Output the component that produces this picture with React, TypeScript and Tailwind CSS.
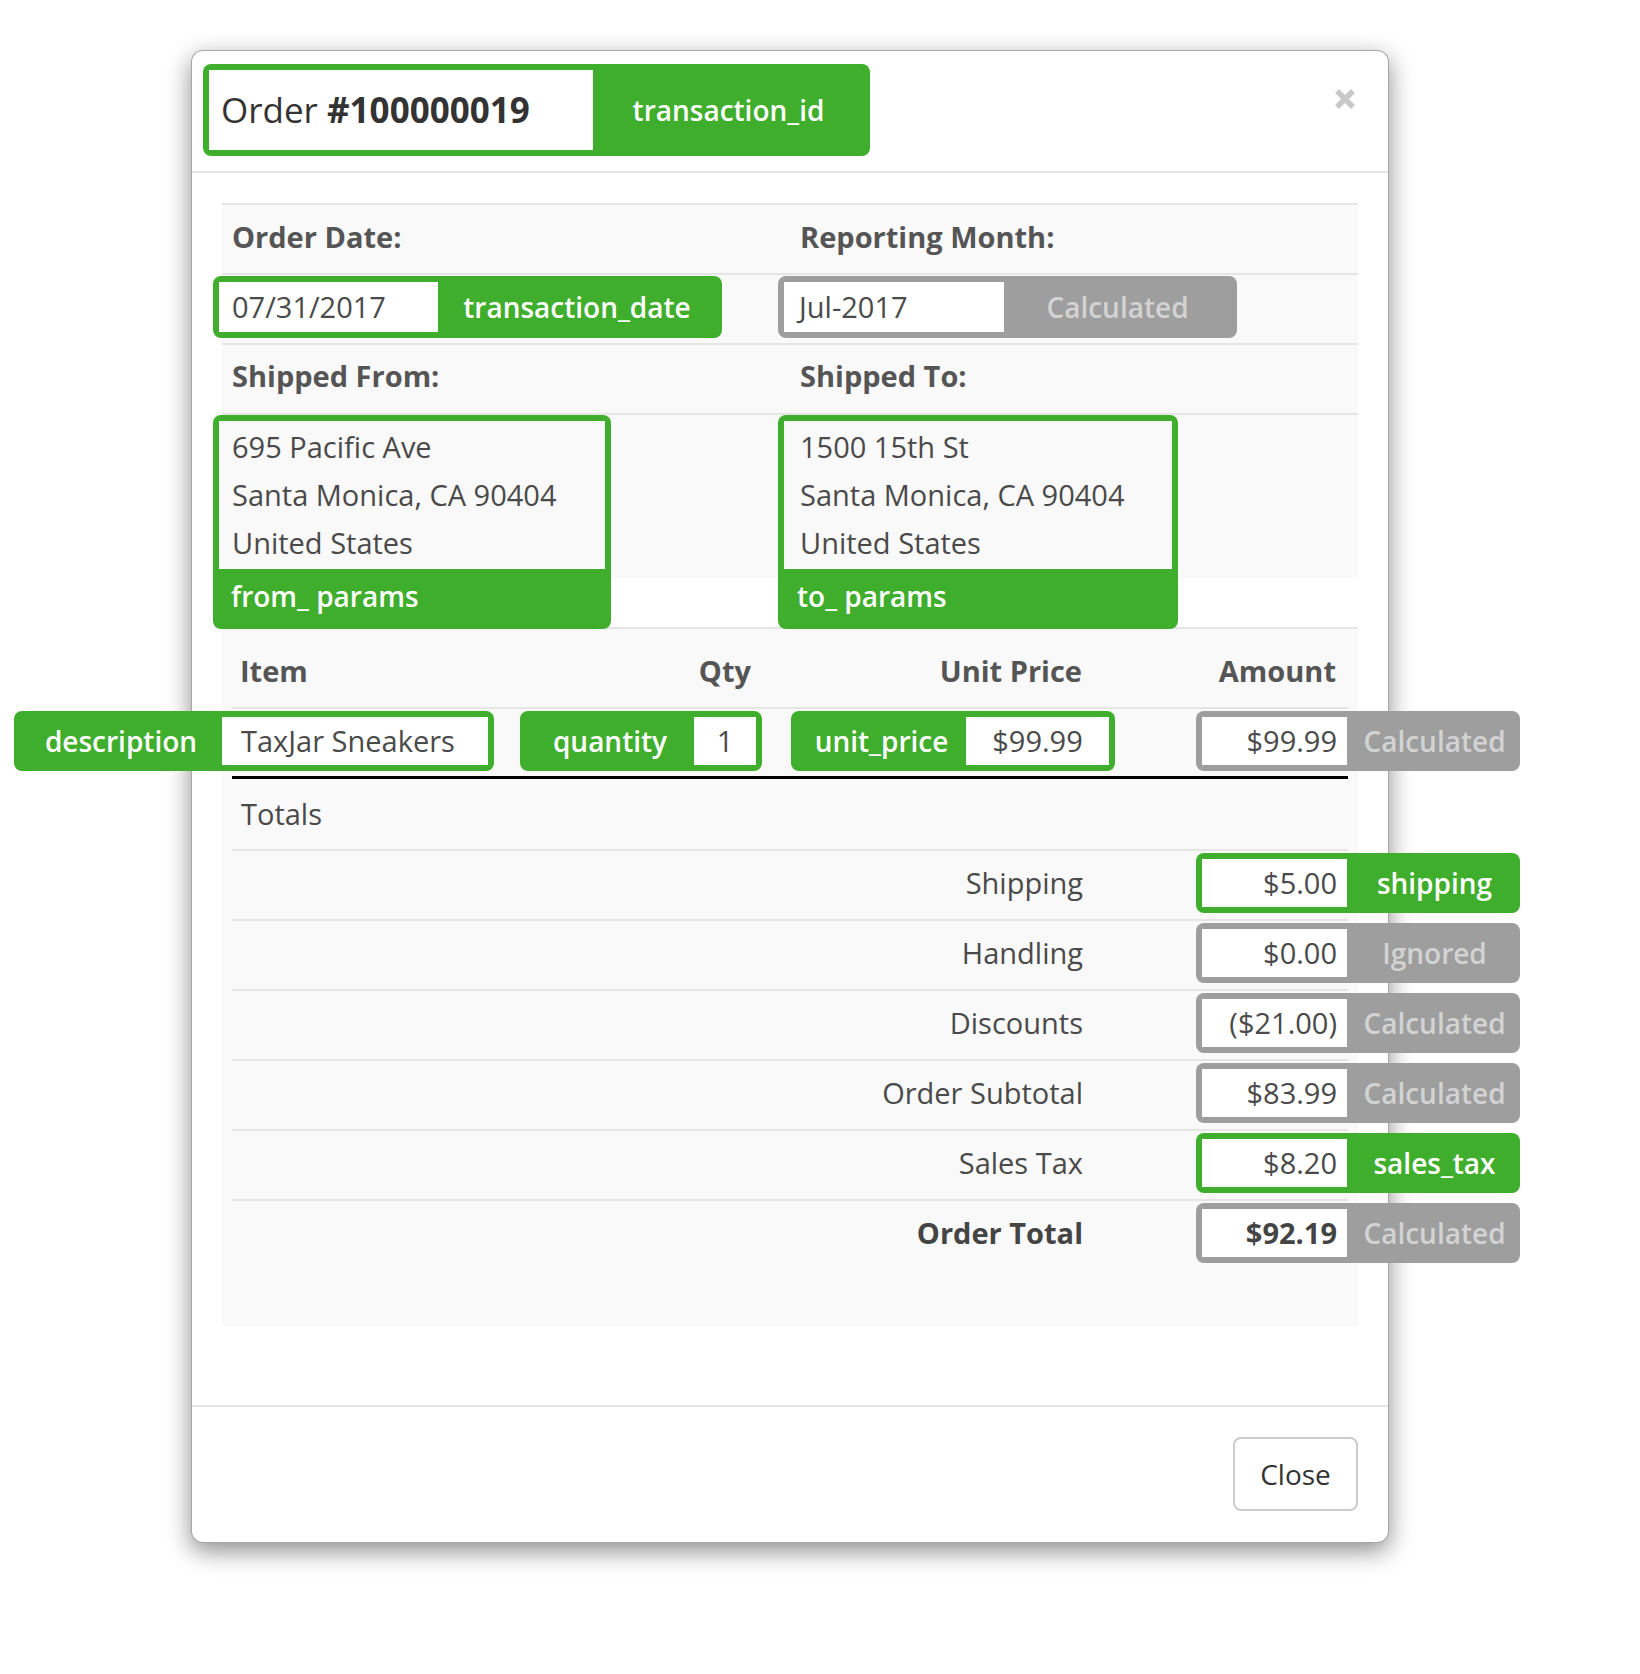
import React from "react";

function XIcon() {
  return (
    <svg width="20" height="20" viewBox="0 0 20 20" className="mt-[25px] flex-none">
      <path d="M2 2 L18 18 M18 2 L2 18" stroke="#c8c8c8" strokeWidth="5.5" strokeLinecap="butt" />
    </svg>
  );
}

function TotalRow({
  label,
  value,
  tag,
  tone,
  bold,
}: {
  label: string;
  value: string;
  tag: string;
  tone: "green" | "gray";
  bold?: boolean;
}) {
  return (
    <div className="flex h-[70px] items-start border-t-2 border-[#e5e5e5] pt-[2px]">
      <div
        className={
          bold
            ? "flex h-[60px] w-[851px] flex-none items-center justify-end font-bold text-[#444]"
            : "flex h-[60px] w-[851px] flex-none items-center justify-end"
        }
      >
        {label}
      </div>
      <div
        className={
          tone === "green"
            ? "relative ml-[113px] flex h-[60px] w-[324px] flex-none rounded-[8px] bg-[#40ae2d] p-[6px]"
            : "relative ml-[113px] flex h-[60px] w-[324px] flex-none rounded-[8px] bg-[#9e9e9e] p-[6px]"
        }
      >
        <div
          className={
            bold
              ? "flex w-[145px] flex-none items-center justify-end bg-white pr-[10px] font-bold text-[#444]"
              : "flex w-[145px] flex-none items-center justify-end bg-white pr-[10px]"
          }
        >
          {value}
        </div>
        <div
          className={
            tone === "green"
              ? "flex flex-1 items-center justify-center pl-[8px] text-[28px] font-semibold text-white"
              : "flex flex-1 items-center justify-center pl-[8px] text-[28px] font-semibold text-[#d3d3d3]"
          }
        >
          {tag}
        </div>
      </div>
    </div>
  );
}

export default function App() {
  return (
    <div className="min-h-[1674px] w-full bg-white pl-[191px] pt-[50px] font-['Open_Sans',sans-serif] text-[29px] leading-[40px] text-[#4a4a4a]">
      <div className="relative w-[1198px] rounded-[12px] border border-[rgba(0,0,0,0.35)] bg-white shadow-[0_8px_24px_rgba(0,0,0,0.45)]">
        {/* Header */}
        <div className="flex items-start justify-between border-b-2 border-[#e5e5e5] pb-[15px] pl-[11px] pr-[33px] pt-[13px]">
          <div className="flex h-[92px] w-[667px] rounded-[8px] bg-[#40ae2d] p-[6px]">
            <div className="flex w-[384px] flex-none items-center bg-white pl-[12px] text-[35px] text-[#333]">
              Order&nbsp;<span className="font-bold">#100000019</span>
            </div>
            <div className="flex flex-1 items-center justify-center text-[28px] font-semibold text-white">transaction_id</div>
          </div>
          <XIcon />
        </div>

        {/* Body */}
        <div className="px-[30px] pb-[79px] pt-[30px]">
          {/* Section A */}
          <div className="border-t-2 border-[#e5e5e5] bg-[#f9f9f9]">
            <div className="grid h-[68px] grid-cols-2 items-center pb-[4px] font-bold text-[#555]">
              <div className="pl-[10px]">Order Date:</div>
              <div className="pl-[10px]">Reporting Month:</div>
            </div>
            <div className="grid h-[70px] grid-cols-2 items-start border-t-2 border-[#e5e5e5] pt-[1px]">
              <div>
                <div className="relative -ml-[9px] flex h-[62px] w-[509px] rounded-[8px] bg-[#40ae2d] p-[6px]">
                  <div className="flex w-[219px] flex-none items-center bg-white pl-[13px]">07/31/2017</div>
                  <div className="flex flex-1 items-center justify-center text-[28px] font-semibold text-white">transaction_date</div>
                </div>
              </div>
              <div>
                <div className="relative -ml-[12px] flex h-[62px] w-[459px] rounded-[8px] bg-[#9e9e9e] p-[6px]">
                  <div className="flex w-[220px] flex-none items-center bg-white pl-[15px]">Jul-2017</div>
                  <div className="flex flex-1 items-center justify-center text-[28px] font-semibold text-[#d3d3d3]">Calculated</div>
                </div>
              </div>
            </div>
            <div className="grid h-[70px] grid-cols-2 items-center border-t-2 border-[#e5e5e5] pb-[6px] font-bold text-[#555]">
              <div className="pl-[10px]">Shipped From:</div>
              <div className="pl-[10px]">Shipped To:</div>
            </div>
            <div className="grid h-[165px] grid-cols-2 items-start border-t-2 border-[#e5e5e5]">
              <div>
                <div className="relative z-10 -ml-[9px] flex h-[214px] w-[398px] flex-col rounded-[8px] bg-[#40ae2d] p-[6px]">
                  <div className="h-[148px] bg-[#f9f9f9] pl-[13px] pt-[2px] leading-[48px]">
                    <div>695 Pacific Ave</div>
                    <div>Santa Monica, CA 90404</div>
                    <div>United States</div>
                  </div>
                  <div className="flex h-[54px] items-center pl-[12px] text-[28px] font-semibold text-white">from_ params</div>
                </div>
              </div>
              <div>
                <div className="relative z-10 -ml-[12px] flex h-[214px] w-[400px] flex-col rounded-[8px] bg-[#40ae2d] p-[6px]">
                  <div className="h-[148px] bg-[#f9f9f9] pl-[16px] pt-[2px] leading-[48px]">
                    <div>1500 15th St</div>
                    <div>Santa Monica, CA 90404</div>
                    <div>United States</div>
                  </div>
                  <div className="flex h-[54px] items-center pl-[13px] text-[28px] font-semibold text-white">to_ params</div>
                </div>
              </div>
            </div>
          </div>

          <div className="h-[49px] bg-white"></div>

          {/* Section B */}
          <div className="relative border-t-2 border-[#e5e5e5] bg-[#f9f9f9] px-[10px] pb-[57px]">
            <div className="grid h-[78px] grid-cols-[348px_179px_331px_258px] items-center pt-[6px] font-bold text-[#555]">
              <div className="pl-[8px]">Item</div>
              <div className="pr-[8px] text-right">Qty</div>
              <div className="pr-[8px] text-right">Unit Price</div>
              <div className="pr-[12px] text-right">Amount</div>
            </div>
            <div className="flex h-[72px] items-start border-b-[3px] border-t-2 border-b-black border-t-[#e5e5e5] pt-[2px]">
              <div className="relative z-10 -ml-[218px] flex h-[60px] w-[480px] flex-none rounded-[8px] bg-[#40ae2d] p-[6px]">
                <div className="flex w-[202px] flex-none items-center justify-center text-[28px] font-semibold text-white">description</div>
                <div className="flex flex-1 items-center bg-white pl-[19px]">TaxJar Sneakers</div>
              </div>
              <div className="relative ml-[26px] flex h-[60px] w-[242px] flex-none rounded-[8px] bg-[#40ae2d] p-[6px]">
                <div className="flex w-[168px] flex-none items-center justify-center text-[28px] font-semibold text-white">quantity</div>
                <div className="flex flex-1 items-center justify-center bg-white">1</div>
              </div>
              <div className="relative ml-[29px] flex h-[60px] w-[324px] flex-none rounded-[8px] bg-[#40ae2d] p-[6px]">
                <div className="flex w-[169px] flex-none items-center justify-center text-[28px] font-semibold text-white">unit_price</div>
                <div className="flex flex-1 items-center justify-center bg-white">$99.99</div>
              </div>
              <div className="relative ml-[81px] flex h-[60px] w-[324px] flex-none rounded-[8px] bg-[#9e9e9e] p-[6px]">
                <div className="flex w-[145px] flex-none items-center justify-end bg-white pr-[10px]">$99.99</div>
                <div className="flex flex-1 items-center justify-center pl-[8px] text-[28px] font-semibold text-[#d3d3d3]">Calculated</div>
              </div>
            </div>
            <div className="flex h-[70px] items-center pl-[9px]">Totals</div>
            <TotalRow label="Shipping" value="$5.00" tag="shipping" tone="green" />
            <TotalRow label="Handling" value="$0.00" tag="Ignored" tone="gray" />
            <TotalRow label="Discounts" value="($21.00)" tag="Calculated" tone="gray" />
            <TotalRow label="Order Subtotal" value="$83.99" tag="Calculated" tone="gray" />
            <TotalRow label="Sales Tax" value="$8.20" tag="sales_tax" tone="green" />
            <TotalRow label="Order Total" value="$92.19" tag="Calculated" tone="gray" bold />
          </div>
        </div>

        {/* Footer */}
        <div className="flex justify-end border-t-2 border-[#e5e5e5] pb-[31px] pr-[30px] pt-[30px]">
          <button className="h-[74px] w-[125px] rounded-[8px] border-2 border-[#cccccc] bg-white text-[28px] text-[#333]">
            Close
          </button>
        </div>
      </div>
    </div>
  );
}
